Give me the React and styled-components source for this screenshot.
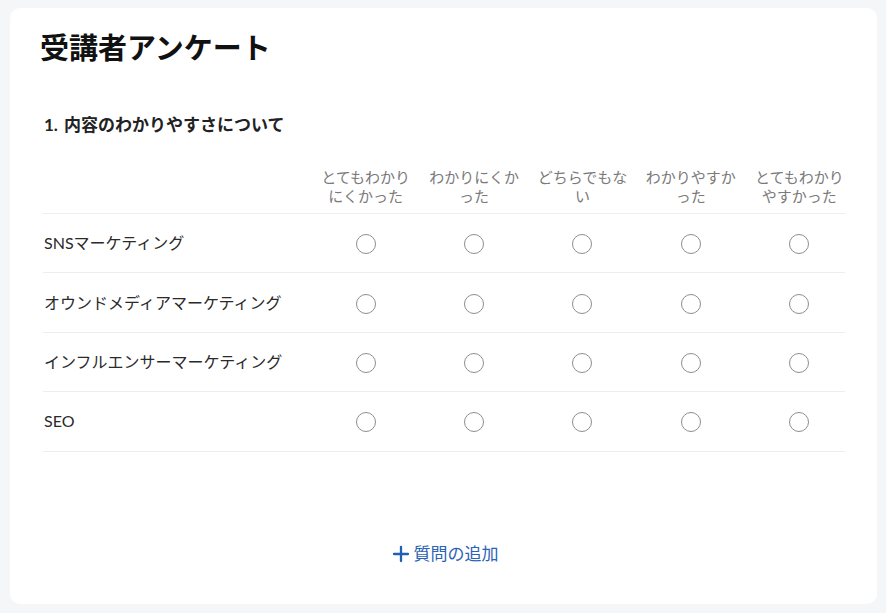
import React from 'react';
import styled, { createGlobalStyle } from 'styled-components';
import { Plus } from 'lucide-react';

const GlobalStyle = createGlobalStyle`
  body {
    margin: 0;
    background: #f5f6f8;
    font-family: Lato, "Noto Sans CJK JP", sans-serif;
  }
`;

const Page = styled.div`
  padding: 8px 9px 9px 10px;
  min-height: 613px;
  box-sizing: border-box;
`;

const Card = styled.div`
  background: #fff;
  border-radius: 10px;
  height: 596px;
  box-sizing: border-box;
  padding: 22px 32px 0 30px;
  display: flex;
  flex-direction: column;
`;

const Title = styled.h1`
  margin: 0;
  font-size: 29px;
  line-height: 35px;
  font-weight: 700;
  color: #111;
`;

const Section = styled.div`
  padding-left: 3px;
  margin-top: 48px;
`;

const Question = styled.h2`
  margin: 0 0 0 1px;
  font-size: 17px;
  line-height: 24px;
  font-weight: 700;
  color: #222;
  word-spacing: 2px;
`;

const Table = styled.table`
  width: 100%;
  border-collapse: collapse;
  margin-top: 31px;
  table-layout: fixed;
`;

const LabelHead = styled.th`
  width: 260px;
  padding: 0;
  border-bottom: 1px solid #eceef1;
`;

const ColHead = styled.th`
  font-weight: 400;
  font-size: 15px;
  line-height: 19px;
  color: #7a7a7a;
  text-align: center;
  padding: 0 0 7px 17px;
  vertical-align: bottom;
  border-bottom: 1px solid #eceef1;
`;

const Row = styled.tr`
  height: 59.4px;
  border-bottom: 1px solid #eceef1;
`;

const Label = styled.td`
  font-size: 16px;
  color: #2a2a2a;
  padding: 0 0 2px 1px;
  white-space: nowrap;
`;

const Cell = styled.td`
  text-align: center;
  vertical-align: middle;
  padding: 0 0 0 17px;
`;

const Radio = styled.input.attrs({ type: 'radio' })`
  appearance: none;
  width: 20px;
  height: 20px;
  margin: 0;
  border: 1.3px solid #8e8e8e;
  border-radius: 50%;
  background: #fff;
  cursor: pointer;
  vertical-align: middle;
  &:checked {
    border: 6px solid #2b63b5;
  }
`;

const AddButton = styled.button`
  align-self: center;
  margin: 90px 0 0 2px;
  display: flex;
  align-items: center;
  gap: 1px;
  background: none;
  border: none;
  padding: 0;
  font-family: inherit;
  font-size: 17px;
  line-height: 24px;
  color: #2b63b5;
  cursor: pointer;
`;

const scale = [
  'とてもわかりにくかった',
  'わかりにくかった',
  'どちらでもない',
  'わかりやすかった',
  'とてもわかりやすかった',
];

const topics = [
  'SNSマーケティング',
  'オウンドメディアマーケティング',
  'インフルエンサーマーケティング',
  'SEO',
];

const App = () => {
  return (
    <Page>
      <GlobalStyle />
      <Card>
        <Title>受講者アンケート</Title>
        <Section>
          <Question>1. 内容のわかりやすさについて</Question>
          <Table>
            <thead>
              <tr>
                <LabelHead />
                {scale.map((s) => (
                  <ColHead key={s}>{s}</ColHead>
                ))}
              </tr>
            </thead>
            <tbody>
              {topics.map((t, i) => (
                <Row key={t}>
                  <Label>{t}</Label>
                  {scale.map((s) => (
                    <Cell key={s}>
                      <Radio name={`q1-${i}`} aria-label={`${t} ${s}`} />
                    </Cell>
                  ))}
                </Row>
              ))}
            </tbody>
          </Table>
        </Section>
        <AddButton>
          <Plus size={24} strokeWidth={2.3} color="#1f5fb4" />
          質問の追加
        </AddButton>
      </Card>
    </Page>
  );
};

export default App;
